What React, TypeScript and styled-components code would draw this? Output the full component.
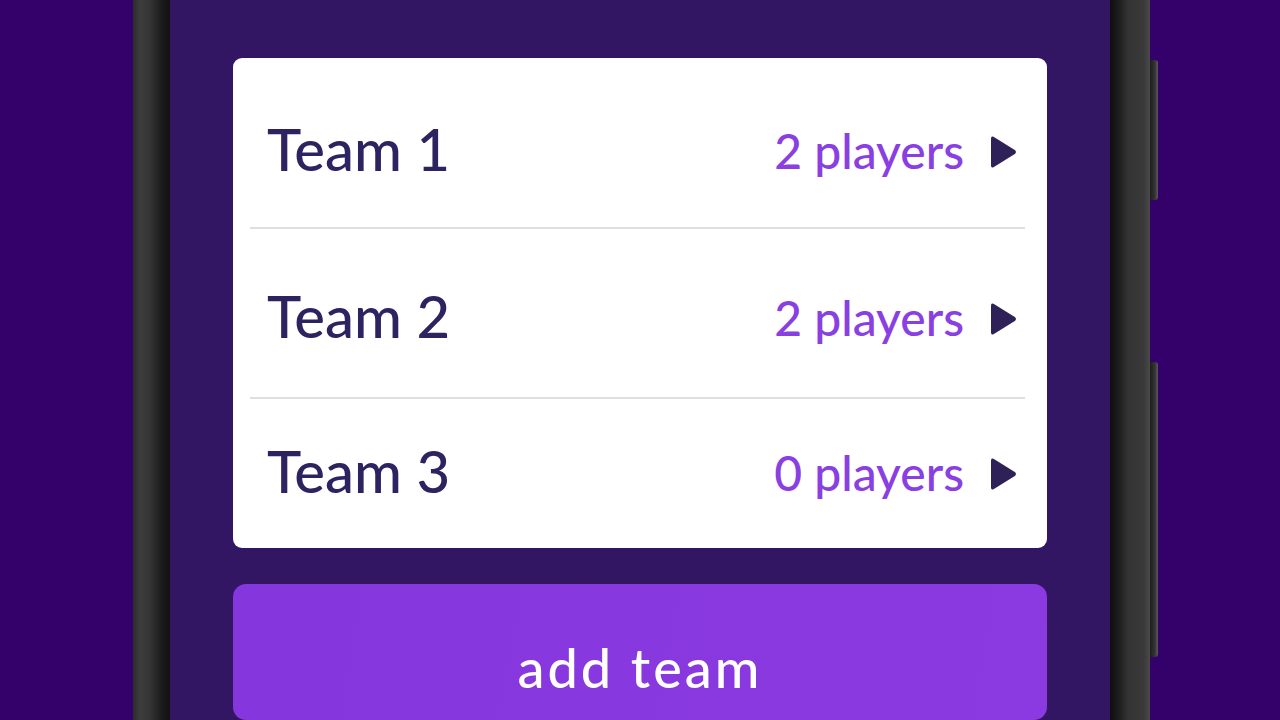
import styled, { createGlobalStyle } from 'styled-components';

const teams = [
  { name: 'Team 1', players: 2, height: 153, shift: -2 },
  { name: 'Team 2', players: 2, height: 168, shift: 3 },
  { name: 'Team 3', players: 0, height: 149, shift: -3 },
];

export default function App() {
  return (
    <>
      <GlobalStyle />
      <Page>
        <Phone>
          <Bezel $side="left" />
          <Screen>
            <Card>
              {teams.map((team, index) => (
                <div key={team.name}>
                  {index > 0 && <Divider />}
                  <Row $height={team.height} $shift={team.shift}>
                    <TeamName>{team.name}</TeamName>
                    <Players>{team.players} players</Players>
                    <Arrow viewBox="0 0 27 34">
                      <path d="M3.5 1.8 L25.2 15.3 Q27 17 25.2 18.7 L3.5 32.2 Q1 33.5 1 30.5 L1 3.5 Q1 0.5 3.5 1.8 Z" />
                    </Arrow>
                  </Row>
                </div>
              ))}
            </Card>
            <AddButton type="button">add team</AddButton>
          </Screen>
          <Bezel $side="right" />
          <SideKey $top={60} $height={140} />
          <SideKey $top={362} $height={295} />
        </Phone>
      </Page>
    </>
  );
}

const GlobalStyle = createGlobalStyle`
  html, body {
    margin: 0;
    padding: 0;
    background: #34006a;
    overflow: hidden;
  }
  body {
    font-family: Lato, 'Open Sans', sans-serif;
  }
`;

const Page = styled.div`
  width: 1280px;
  height: 720px;
  display: flex;
  padding-left: 133px;
  box-sizing: border-box;
`;

const Phone = styled.div`
  position: relative;
  display: flex;
  height: 720px;
`;

const Bezel = styled.div<{ $side: 'left' | 'right' }>`
  width: ${(p) => (p.$side === 'left' ? 37 : 40)}px;
  background: ${(p) =>
    p.$side === 'left'
      ? 'linear-gradient(90deg, #2c2c2c 0%, #3d3d3d 20%, #353535 45%, #1a1a1a 80%, #121212 100%)'
      : 'linear-gradient(90deg, #0e0e0e 0%, #1c1c1c 20%, #333333 45%, #3a3a3a 85%, #4a4a4a 100%)'};
`;

const SideKey = styled.div<{ $top: number; $height: number }>`
  position: absolute;
  right: -8px;
  top: ${(p) => p.$top}px;
  width: 8px;
  height: ${(p) => p.$height}px;
  border-radius: 0 3px 3px 0;
  background: linear-gradient(90deg, #1e1e1e 0%, #333 60%, #5a5a5a 100%);
`;

const Screen = styled.div`
  width: 940px;
  background: #321563;
  padding: 58px 63px 0;
  box-sizing: border-box;
  display: flex;
  flex-direction: column;
  gap: 36px;
`;

const Card = styled.div`
  background: #ffffff;
  border-radius: 9px;
  padding-top: 16px;
`;

const Row = styled.div<{ $height: number; $shift: number }>`
  height: ${(p) => p.$height}px;
  display: flex;
  align-items: center;
  padding: 0 30px 0 34px;
  box-sizing: border-box;
  transform: translateY(${(p) => p.$shift}px);
`;

const Divider = styled.div`
  height: 2px;
  background: #e0dde3;
  margin: 0 22px 0 17px;
`;

const TeamName = styled.span`
  flex: 1;
  font-size: 58px;
  font-weight: 500;
  color: #2c2360;
  line-height: 1;
`;

const Players = styled.span`
  font-size: 48px;
  font-weight: 500;
  color: #8a3fe2;
  line-height: 1;
  margin-right: 26px;
  transform: translateY(2px);
`;

const Arrow = styled.svg`
  width: 27px;
  height: 34px;
  fill: #2e2158;
  margin-top: 6px;
`;

const AddButton = styled.button`
  height: 160px;
  border: none;
  border-radius: 13px;
  background: linear-gradient(100deg, #8536dc 0%, #8a3ae0 100%);
  color: #ffffff;
  font-family: Lato, 'Open Sans', sans-serif;
  font-size: 54px;
  font-weight: 500;
  letter-spacing: 3px;
  display: flex;
  justify-content: center;
  align-items: flex-start;
  padding-top: 57px;
  line-height: 1;
`;
